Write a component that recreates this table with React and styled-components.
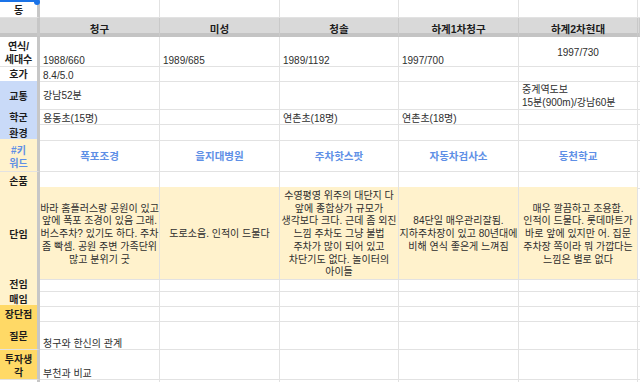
import React from 'react'
import styled, { createGlobalStyle } from 'styled-components'

const GlobalStyle = createGlobalStyle`
  html, body { margin: 0; padding: 0; background: #fff; }
  body { font-family: "Liberation Sans", "Noto Sans CJK KR", sans-serif; }
`

const COLS = '40px 120px 120px 119px 120px 119px 1fr'
const YELLOW = '#fff2cc'
const GOLD = '#ffd966'
const BLUE = '#c9daf8'
const LINK = '#5e8fe6'

const Sheet = styled.div`
  position: relative;
  width: 640px;
  height: 382px;
  overflow: hidden;
  background: #fff;
  color: #2e2e2e;
  font-size: 10px;
`

const Row = styled.div`
  display: grid;
  grid-template-columns: ${COLS};
  height: ${p => p.$h}px;
  box-sizing: border-box;
`

const HeaderRow = styled(Row)`
  border-bottom: 4px solid #c4c4c4;
  background: #d9d9d9;
`

// sheets puts text at the bottom of a cell unless told otherwise
const Cell = styled.div`
  box-sizing: border-box;
  display: flex;
  flex-direction: column;
  justify-content: ${p => (p.$v === 'middle' ? 'center' : 'flex-end')};
  align-items: ${p => (p.$center ? 'center' : 'flex-start')};
  text-align: ${p => (p.$center ? 'center' : 'left')};
  padding: ${p => (p.$v === 'middle' ? '3px 3px 0' : '0 3px')};
  border-right: 1px solid #e2e2e2;
  border-bottom: 1px solid #e2e2e2;
  background: ${p => p.$bg || 'transparent'};
  white-space: pre;
  line-height: ${p => (p.$v === 'middle' ? '12.7px' : '11px')};
  min-width: 0;
`

const Label = styled(Cell)`
  align-items: center;
  justify-content: center;
  text-align: center;
  padding: 3px 0 0;
  border-right: 3px solid #c7c7c7;
  font-weight: bold;
  color: ${p => p.$color || '#1c1c1c'};
  line-height: 13px;
`

const HeadCell = styled.div`
  box-sizing: border-box;
  display: flex;
  align-items: center;
  justify-content: center;
  padding-top: 3px;
  border-right: ${p => (p.$corner ? '3px solid #c7c7c7' : '1px solid #c9c9c9')};
  font-weight: bold;
  font-size: 10.5px;
  color: #1c1c1c;
`

const Keyword = styled.span`
  color: ${LINK};
  font-weight: bold;
  font-size: 10.5px;
`

const SelectEdge = styled.div`
  position: absolute;
  left: 0;
  top: 0;
  width: 38px;
  height: 2px;
  background: #1a73e8;
`

const SelectDot = styled.div`
  position: absolute;
  left: 34px;
  top: -1px;
  width: 6px;
  height: 6px;
  border-radius: 50%;
  background: #1a73e8;
`

const heads = ['청구', '미성', '청솔', '하계1차청구', '하계2차현대']

const rows = [
  {
    h: 28,
    label: '연식/\n세대수',
    cells: [{ t: '1988/660' }, { t: '1989/685' }, { t: '1989/1192' }, { t: '1997/700' }, { t: '1997/730', center: true, v: 'middle' }],
  },
  { h: 16, label: '호가', cells: [{ t: '8.4/5.0' }] },
  {
    h: 27,
    label: '교통',
    labelBg: BLUE,
    cells: [{ t: '강남52분', v: 'middle' }, {}, {}, {}, { t: '중계역도보\n15분(900m)/강남60분', v: 'middle' }],
  },
  { h: 16, label: '학군', labelBg: BLUE, cells: [{ t: '용동초(15명)' }, {}, { t: '연촌초(18명)' }, { t: '연촌초(18명)' }] },
  { h: 15, label: '환경', labelBg: BLUE, cells: [] },
  {
    h: 33,
    label: '#키\n워드',
    labelBg: YELLOW,
    labelColor: LINK,
    keywords: ['폭포조경', '을지대병원', '주차핫스팟', '자동차검사소', '동천학교'],
  },
  { h: 15, label: '손품', labelBg: YELLOW, cells: [] },
  {
    h: 88,
    label: '단임',
    labelBg: YELLOW,
    rowBg: YELLOW,
    allCenter: true,
    cells: [
      { t: '바라 홈플러스랑 공원이 있고\n앞에 폭포 조경이 있음 그래.\n버스주차? 있기도 하다. 주차\n좀 빡셈. 공원 주변 가족단위\n많고 분위기 굿' },
      { t: '도로소음. 인적이 드물다' },
      { t: '수영평영 위주의 대단지 다\n앞에 종합상가 규모가\n생각보다 크다. 근데 좀 외진\n느낌 주차도 그냥 불법\n주차가 많이 되어 있고\n차단기도 없다. 놀이터의\n아이들' },
      { t: '84단일 매우관리잘됨.\n지하주차장이 있고 80년대에\n비해 연식 좋은게 느껴짐' },
      { t: '매우 깔끔하고 조용함.\n인적이 드물다. 롯데마트가\n바로 앞에 있지만 어. 집문\n주차장 쪽이라 뭐 가깝다는\n느낌은 별로 없다' },
    ],
  },
  { h: 15, label: '전임', labelBg: YELLOW, cells: [] },
  { h: 15, label: '매임', labelBg: YELLOW, cells: [] },
  { h: 15, label: '장단점', labelBg: GOLD, cells: [] },
  { h: 30, label: '질문', labelBg: GOLD, cells: [{ t: '청구와 한신의 관계' }] },
  { h: 30, label: '투자생\n각', labelBg: GOLD, cells: [{ t: '부천과 비교' }] },
  { h: 20, label: '', cells: [] },
]

function DataRow({ row }) {
  const slots = [0, 1, 2, 3, 4, 5]
  return (
    <Row $h={row.h}>
      <Label $bg={row.labelBg} $color={row.labelColor}>{row.label}</Label>
      {slots.map(i => {
        if (row.keywords && i < 5) {
          return (
            <Cell key={i} $center $v="middle">
              <Keyword>{row.keywords[i]}</Keyword>
            </Cell>
          )
        }
        const c = (row.cells && row.cells[i]) || {}
        const center = row.allCenter || c.center
        const v = row.allCenter ? 'middle' : c.v
        return (
          <Cell key={i} $bg={i < 5 ? row.rowBg : undefined} $center={center} $v={v}>
            {c.t}
          </Cell>
        )
      })}
    </Row>
  )
}

export default function App() {
  return (
    <Sheet>
      <GlobalStyle />
      <Row $h={18}>
        <Label>동</Label>
        <Cell />
        <Cell />
        <Cell />
        <Cell />
        <Cell />
        <Cell />
      </Row>
      <HeaderRow $h={19}>
        <HeadCell $corner />
        {heads.map(h => (
          <HeadCell key={h}>{h}</HeadCell>
        ))}
        <HeadCell />
      </HeaderRow>
      {rows.map((r, i) => (
        <DataRow key={i} row={r} />
      ))}
      <SelectEdge />
      <SelectDot />
    </Sheet>
  )
}
